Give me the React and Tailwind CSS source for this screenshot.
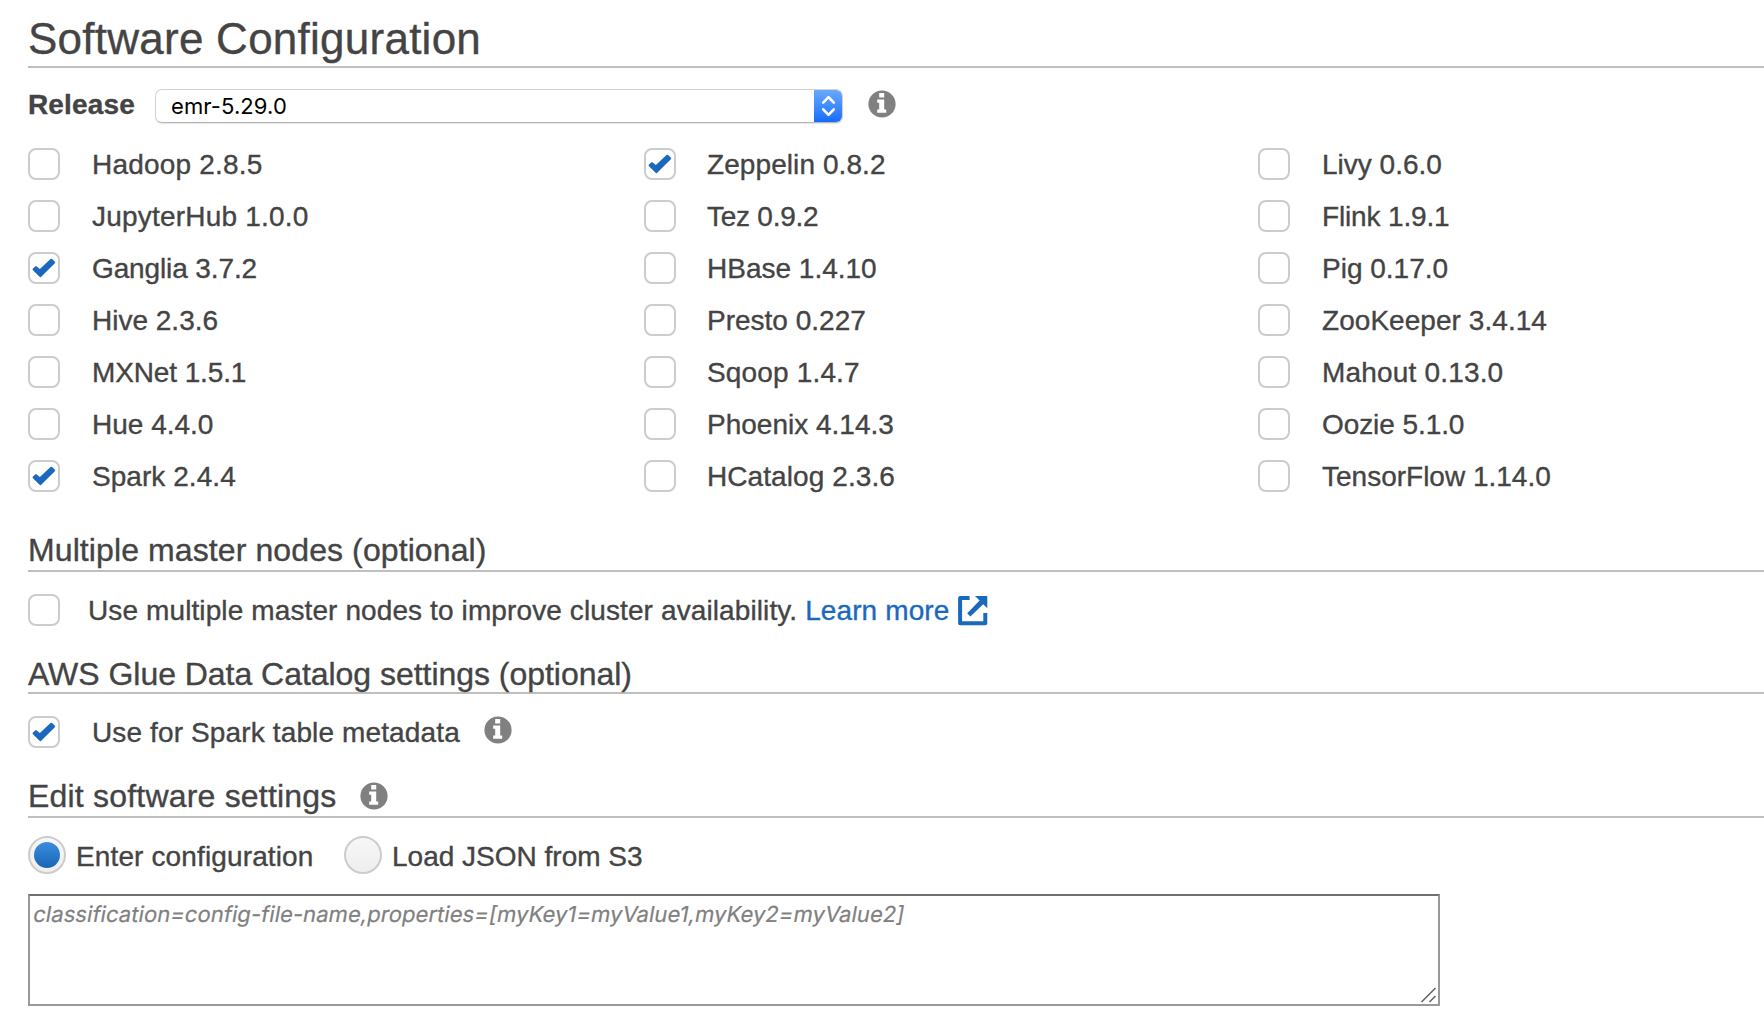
import React from "react";

const COLUMNS = [
  [
    ["Hadoop 2.8.5", false, "tracking-[0.19px]"],
    ["JupyterHub 1.0.0", false, "tracking-[0.2px]"],
    ["Ganglia 3.7.2", true, "tracking-[-0.12px]"],
    ["Hive 2.3.6", false, ""],
    ["MXNet 1.5.1", false, "tracking-[-0.12px]"],
    ["Hue 4.4.0", false, ""],
    ["Spark 2.4.4", true, "tracking-[0.05px]"],
  ],
  [
    ["Zeppelin 0.8.2", true, "tracking-[0.08px]"],
    ["Tez 0.9.2", false, "tracking-[-0.25px]"],
    ["HBase 1.4.10", false, ""],
    ["Presto 0.227", false, ""],
    ["Sqoop 1.4.7", false, "tracking-[0.16px]"],
    ["Phoenix 4.14.3", false, ""],
    ["HCatalog 2.3.6", false, "tracking-[0.08px]"],
  ],
  [
    ["Livy 0.6.0", false, ""],
    ["Flink 1.9.1", false, "tracking-[-0.15px]"],
    ["Pig 0.17.0", false, ""],
    ["ZooKeeper 3.4.14", false, "tracking-[0.05px]"],
    ["Mahout 0.13.0", false, "tracking-[0.18px]"],
    ["Oozie 5.1.0", false, "tracking-[-0.08px]"],
    ["TensorFlow 1.14.0", false, ""],
  ],
];

function Checkbox({ checked }) {
  return (
    <span className="flex size-8 shrink-0 items-center justify-center rounded-lg border-2 border-[#cccccc] bg-white">
      {checked && (
        <svg width="28" height="28" viewBox="0 0 28 28">
          <path d="M3.8 15.4 6 13.3 9.9 16.6 21.3 5.9 24 8.5 10.4 22Z" fill="#1b69bd" stroke="#1b69bd" strokeWidth="2.4" strokeLinejoin="round" />
        </svg>
      )}
    </span>
  );
}

function InfoIcon({ className }) {
  return (
    <svg width="28" height="28" viewBox="0 0 28 28" className={"shrink-0 " + className}>
      <circle cx="14" cy="14" r="13.6" fill="#808080" />
      <path d="M11.2 2.9h5v4.5h-5zM9.2 9.4h7v10h2v3.4h-9v-3.4h2v-6.6h-2z" fill="#fff" />
    </svg>
  );
}

function Radio({ selected }) {
  return (
    <span className="flex size-[38px] shrink-0 items-center justify-center rounded-full border-2 border-[#cccccc] bg-linear-to-b from-[#f7f7f7] to-[#eeeeee]">
      {selected && <span className="size-[26px] rounded-full bg-linear-to-b from-[#3c8ee0] to-[#1764b4]" />}
    </span>
  );
}

export default function App() {
  return (
    <main className="h-[1034px] w-full overflow-hidden bg-white pl-7 font-['Liberation_Sans',Arial,sans-serif] text-[28px] leading-8 text-[#444444] [-webkit-text-stroke:0.35px]">
      <h1 className="h-[68px] border-b-2 border-[#bfbfbf] pt-[17px] text-[44px] leading-[44px] tracking-[0.25px]">
        Software Configuration
      </h1>

      <div className="flex h-[70px] items-start pt-[20px]">
        <span className="w-[127px] pt-px font-bold tracking-[0.15px]">Release</span>
        <div className="mt-px flex h-[34px] w-[688px] items-stretch overflow-hidden rounded-[7px] border border-[#d2d2d2] border-b-[#b5b5b5] shadow-[0_1px_1px_rgba(0,0,0,0.1)]">
          <span className="flex-1 pl-[15px] font-[Inter,sans-serif] text-[22px] leading-8 tracking-[0.1px] text-black [-webkit-text-stroke:0px]">emr-5.29.0</span>
          <span className="-my-px -mr-px flex w-[29px] items-center justify-center bg-linear-to-b from-[#6cabfa] to-[#1169fe]">
            <svg width="29" height="34" viewBox="0 0 29 34" fill="none" stroke="#fff" strokeWidth="2.6" strokeLinecap="round" strokeLinejoin="round">
              <path d="M9.2 13.6 14.5 8.2 19.8 13.6M9.2 20.4 14.5 25.8 19.8 20.4" />
            </svg>
          </span>
        </div>
        <InfoIcon className="ml-[25px] mt-[2px]" />
      </div>

      <div className="flex">
        {COLUMNS.map((items, i) => (
          <ul key={i} className={i === 0 ? "w-[616px] shrink-0" : i === 1 ? "w-[614px] shrink-0" : "grow"}>
            {items.map(([name, checked, tracking]) => (
              <li key={name} className={i === 1 ? "flex h-[52px] items-center gap-[31px]" : "flex h-[52px] items-center gap-8"}>
                <Checkbox checked={checked} />
                <span className={"whitespace-nowrap pt-0.5 " + tracking}>{name}</span>
              </li>
            ))}
          </ul>
        ))}
      </div>

      <h2 className="mt-7 border-b-2 border-[#bfbfbf] text-[32px] leading-10 tracking-[0.1px]">Multiple master nodes (optional)</h2>
      <div className="flex h-[76px] items-center">
        <Checkbox />
        <span className="ml-7 whitespace-nowrap pt-0.5 tracking-[0.11px]">
          Use multiple master nodes to improve cluster availability. <a className="text-[#1b69bd]">Learn more</a>
        </span>
        <svg width="30" height="30" viewBox="0 0 30 30" className="ml-[9px] mt-0.5">
          <path d="M11.6 2H2.1v25.3h25.2V17" fill="none" stroke="#1b69bd" strokeWidth="4" strokeLinejoin="round" />
          <path d="M17 0H29.3V12.3L25.2 8.2 12.4 20.4 9.2 17.2 21.6 4.6Z" fill="#1b69bd" />
        </svg>
      </div>

      <h2 className="mt-2 border-b-2 border-[#bfbfbf] text-[32px] leading-9 tracking-[-0.035px]">AWS Glue Data Catalog settings (optional)</h2>
      <div className="flex h-[76px] items-center">
        <Checkbox checked />
        <span className="ml-8 whitespace-nowrap pt-0.5 tracking-[0.13px]">Use for Spark table metadata</span>
        <InfoIcon className="mb-1 ml-6" />
      </div>

      <h2 className="mt-1.5 flex items-center border-b-2 border-[#bfbfbf] text-[32px] leading-10 tracking-[0.2px]">
        Edit software settings
        <InfoIcon className="ml-[23px]" />
      </h2>
      <div className="flex h-[74px] items-center">
        <Radio selected />
        <span className="ml-2.5 w-[268px] whitespace-nowrap pt-[3px] tracking-[0.13px]">Enter configuration</span>
        <Radio />
        <span className="ml-2.5 whitespace-nowrap pt-[3px]">Load JSON from S3</span>
      </div>

      <div className="mt-0.5 flex h-28 w-[1412px] items-end justify-between border-2 border-[#999999] border-t-[#707070]">
        <span className="-skew-x-[10deg] self-start pl-1 pt-1 font-[Inter,sans-serif] text-[22px] leading-7 tracking-[0.06px] text-[#808080] [-webkit-text-stroke:0.2px]">
          classification=config-file-name,properties=[myKey1=myValue1,myKey2=myValue2]
        </span>
        <svg width="18" height="18" viewBox="0 0 18 18" stroke="#666" strokeWidth="1.6">
          <path d="M1.5 16 15.5 2M9.5 16 15.5 10" />
        </svg>
      </div>
    </main>
  );
}
